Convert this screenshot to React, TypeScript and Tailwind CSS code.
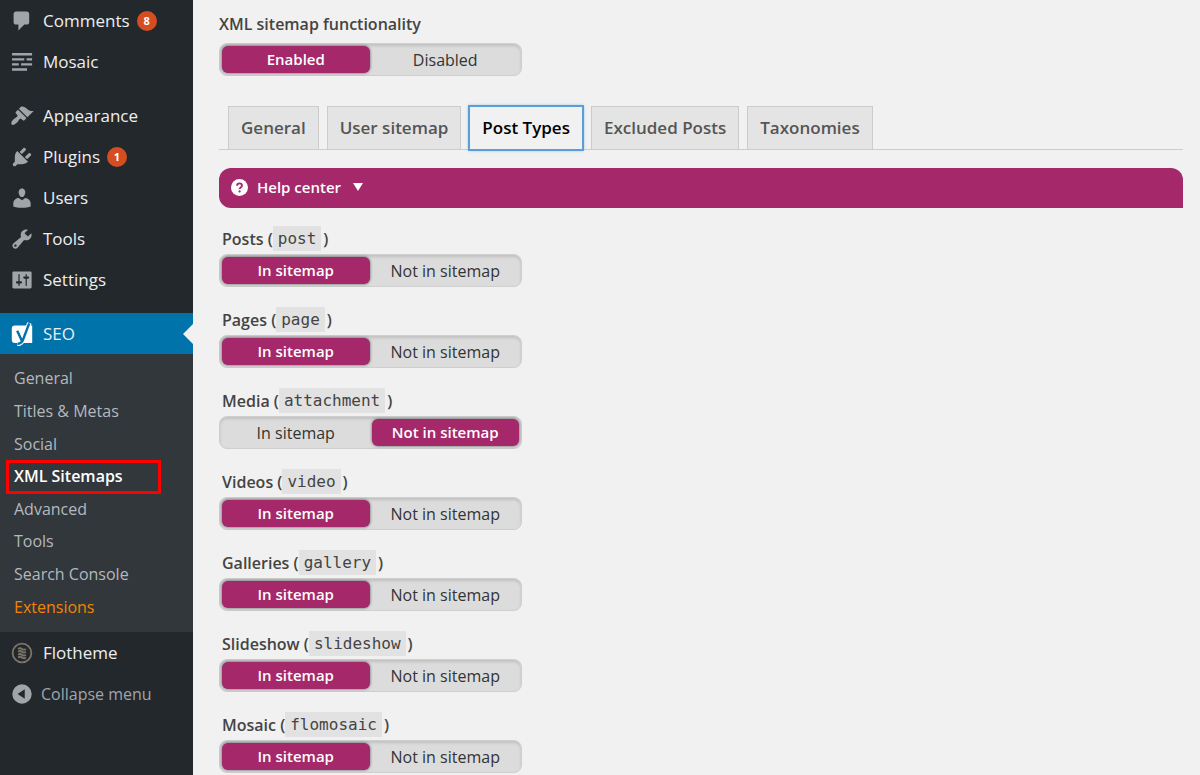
import React, { useState } from "react";

const icons: Record<string, React.ReactNode> = {
  comments: <path d="M5 2h9c1.1 0 2 .9 2 2v7c0 1.1-.9 2-2 2h-2l-5 5v-5H5c-1.1 0-2-.9-2-2V4c0-1.1.9-2 2-2z" />,
  mosaic: <path d="M1.700 2.600h16.700v2H1.700zM1.700 6.800h10.200v2H1.700zM13.800 6.800h4.600v2h-4.600zM1.700 11h5.600v2H1.700zM9.200 11h9.200v2H9.200zM1.700 15.200h12.500v2H1.700z" />,
  appearance: <path d="M14.48 11.06L7.41 3.99l1.5-1.5c.5-.56 2.3-.47 3.51.32 1.21.8 1.43 1.28 2.91 2.1 1.18.64 2.45 1.26 4.45.85zm-.71.71L6.7 4.7 4.93 6.47c-.39.39-.39 1.02 0 1.41l1.06 1.06c.39.39.39 1.03 0 1.42-.6.6-1.43 1.11-2.21 1.69-.35.26-.7.53-1.01.84C1.43 14.23.4 16.08 1.4 17.07c.99 1 2.84-.03 4.18-1.36.31-.31.58-.66.85-1.02.57-.78 1.08-1.61 1.69-2.21.39-.39 1.02-.39 1.41 0l1.06 1.06c.39.39 1.02.39 1.41 0z" />,
  plugins: <path d="M13.11 4.36L9.87 7.6 8 5.73l3.24-3.24c.35-.34 1.05-.2 1.56.32.52.51.66 1.21.31 1.55zm-8 1.77l.91-1.12 9.01 9.01-1.19.84c-.71.71-2.63 1.16-3.82 1.16H6.14L4.9 17.26c-.59.59-1.54.59-2.12 0-.59-.58-.59-1.53 0-2.12l1.24-1.24v-3.88c0-1.13.4-3.19 1.09-3.89zm7.26 3.97l3.24-3.24c.34-.35 1.04-.21 1.55.31.52.51.66 1.21.31 1.55l-3.24 3.25z" />,
  users: <path d="M10 9.25c-2.27 0-2.73-3.44-2.73-3.44C7 4.02 7.82 2 9.97 2c2.16 0 2.98 2.02 2.71 3.81 0 0-.41 3.44-2.68 3.44zm0 2.57L12.72 10c2.39 0 4.52 2.33 4.52 4.53v2.49s-3.65 1.13-7.24 1.13c-3.65 0-7.24-1.13-7.24-1.13v-2.49c0-2.25 1.94-4.48 4.47-4.48z" />,
  tools: <path d="M16.68 9.77c-1.34 1.34-3.3 1.67-4.95.99l-5.41 6.52c-.99.99-2.59.99-3.58 0s-.99-2.59 0-3.57l6.52-5.42c-.68-1.65-.35-3.61.99-4.95 1.28-1.28 3.12-1.62 4.72-1.06l-2.89 2.89 2.82 2.82 2.86-2.87c.53 1.58.18 3.39-1.08 4.65zM3.81 16.21c.4.39 1.04.39 1.43 0 .4-.4.4-1.04 0-1.43-.39-.4-1.03-.4-1.43 0-.39.39-.39 1.03 0 1.43z" />,
  settings: <path d="M18 16V4c0-.55-.45-1-1-1H3c-.55 0-1 .45-1 1v12c0 .55.45 1 1 1h14c.55 0 1-.45 1-1zM8 11h1c.55 0 1 .45 1 1s-.45 1-1 1H8v1.5c0 .28-.22.5-.5.5s-.5-.22-.5-.5V13H6c-.55 0-1-.45-1-1s.45-1 1-1h1V5.5c0-.28.22-.5.5-.5s.5.22.5.5V11zm5-2h-1c-.55 0-1-.45-1-1s.45-1 1-1h1V5.5c0-.28.22-.5.5-.5s.5.22.5.5V7h1c.55 0 1 .45 1 1s-.45 1-1 1h-1v5.5c0 .28-.22.5-.5.5s-.5-.22-.5-.5V9z" />,
  seo: (
    <>
      <path fill="#fff" d="M4 3h14.500v14.500H4A2.500 2.500 0 0 1 1.500 15V5.500A2.500 2.500 0 0 1 4 3z" />
      <path fill="none" stroke="#fff" strokeWidth="3.800" d="M16.200 .800L10.700 15.200Q9.500 18.300 6 18.500" />
      <path fill="none" stroke="#0073aa" strokeWidth="2" d="M16 1.200L10.700 15.200Q9.500 18 6.200 18.200M6 7.200l3.800 8.300" />
    </>
  ),
  flotheme: (
    <g fill="none" stroke="#7d7468">
      <circle cx="10" cy="10" r="7.800" strokeWidth="1.500" />
      <path strokeWidth="1.600" d="M6.800 6.600q1.600-1.200 3.200 0t3.200 0M6.800 9q1.600-1.200 3.200 0t3.200 0M6.800 11.400q1.600-1.200 3.200 0t3.200 0M6.800 13.800q1.600-1.200 3.200 0t3.200 0" />
    </g>
  ),
  collapse: <path fillRule="evenodd" d="M10 1.900a8.100 8.100 0 1 0 0 16.200 8.100 8.100 0 0 0 0-16.200zM12.300 6v8L6.300 10z" />,
};

const Icon = ({ name }: { name: string }) => (
  <svg viewBox="0 0 20 20" className="w-6 h-6 shrink-0 fill-[#a0a5aa]" aria-hidden="true">
    {icons[name]}
  </svg>
);

const MenuItem = ({ icon, label, count }: { icon: string; label: string; count?: number }) => (
  <a href="#" className="flex items-center h-[41px] pl-[10px] text-[17px] text-[#eee]">
    <Icon name={icon} />
    <span className="ml-[9px]">{label}</span>
    {count && (
      <span className="ml-[7px] w-5 h-5 rounded-full bg-[#d54e21] text-white text-[11px] leading-5 font-bold text-center">
        {count}
      </span>
    )}
  </a>
);

const subItems = [
  "General",
  "Titles & Metas",
  "Social",
  "XML Sitemaps",
  "Advanced",
  "Tools",
  "Search Console",
  "Extensions",
];

const subItemClass = (item: string) => {
  if (item === "XML Sitemaps") return "text-white font-semibold";
  if (item === "Extensions") return "text-[#f18500]";
  return "text-[#b4b9be]";
};

const Sidebar = () => (
  <nav className="w-[193px] shrink-0 bg-[#23282d]">
    <MenuItem icon="comments" label="Comments" count={8} />
    <MenuItem icon="mosaic" label="Mosaic" />
    <div className="h-[13px]" />
    <MenuItem icon="appearance" label="Appearance" />
    <MenuItem icon="plugins" label="Plugins" count={1} />
    <MenuItem icon="users" label="Users" />
    <MenuItem icon="tools" label="Tools" />
    <MenuItem icon="settings" label="Settings" />
    <div className="h-[13px]" />
    <div className="relative bg-[#0073aa]">
      <MenuItem icon="seo" label="SEO" />
      <span className="absolute right-0 top-[11px] border-y-[10px] border-r-[10px] border-y-transparent border-r-[#f1f1f1]" />
    </div>
    <ul className="grid auto-rows-fr min-h-[278px] pt-2 pb-[9px] bg-[#32373c] text-[16px]">
      {subItems.map((item) => (
        <li key={item} className="relative flex items-center pl-[14px]">
          <a href="#" className={subItemClass(item)}>{item}</a>
          {item === "XML Sitemaps" && (
            <span className="absolute left-[6px] top-0 w-[155px] h-[34px] border-[3px] border-[#f00]" />
          )}
        </li>
      ))}
    </ul>
    <MenuItem icon="flotheme" label="Flotheme" />
    <button className="flex items-center h-[41px] pl-[10px] text-[16px] text-[#a0a5aa]">
      <Icon name="collapse" />
      <span className="ml-[7px]">Collapse menu</span>
    </button>
  </nav>
);

type SwitchProps = {
  name: string;
  options: string[];
  initial?: number;
};

const Switch = ({ name, options, initial = 0 }: SwitchProps) => {
  const [selected, setSelected] = useState(initial);

  return (
    <div className="grid grid-cols-2 gap-[2px] w-[303px] h-[33px] p-[2px] rounded-lg bg-[#dcdcdc] border border-[#cfcfcf] shadow-[inset_0_2px_3px_rgba(0,0,0,0.12)]">
      {options.map((option, i) => (
        <label
          key={option}
          className={
            selected === i
              ? "flex items-center justify-center rounded-md bg-[#a4286a] text-white text-[15px] font-semibold shadow-[0_0_3px_rgba(0,0,0,0.6)]"
              : "flex items-center justify-center rounded-md text-[#333]"
          }
        >
          <input
            type="radio"
            name={name}
            checked={selected === i}
            onChange={() => setSelected(i)}
            className="sr-only"
          />
          {option}
        </label>
      ))}
    </div>
  );
};

const tabs = ["General", "User sitemap", "Post Types", "Excluded Posts", "Taxonomies"];

const postTypes = [
  { label: "Posts", slug: "post" },
  { label: "Pages", slug: "page" },
  { label: "Media", slug: "attachment", excluded: true },
  { label: "Videos", slug: "video" },
  { label: "Galleries", slug: "gallery" },
  { label: "Slideshow", slug: "slideshow" },
  { label: "Mosaic", slug: "flomosaic" },
];

const App = () => {
  const [tab, setTab] = useState("Post Types");

  return (
    <div className="flex min-h-screen bg-[#f1f1f1] font-['Open_Sans',sans-serif] text-[16px] text-[#444]">
      <Sidebar />

      <main className="flex-1 min-w-0 pt-[13px] pl-[26px] pr-[17px]">
        <h2 className="font-semibold leading-[22px] mb-2">XML sitemap functionality</h2>
        <Switch name="sitemap" options={["Enabled", "Disabled"]} />

        <div className="flex items-start gap-2 mt-[30px] pl-[9px] border-b border-[#ccc]">
          {tabs.map((t) => (
            <button
              key={t}
              onClick={() => setTab(t)}
              className={
                tab === t
                  ? "h-[44px] px-[12px] -mb-[2px] border border-[#5b9dd9] bg-[#f1f1f1] text-black text-[17px] font-semibold shadow-[0_0_0_1px_#5b9dd9,0_0_3px_rgba(30,140,190,0.8)]"
                  : "h-[43px] px-[12px] border border-b-0 border-[#ccc] bg-[#e4e4e4] text-[#555] text-[17px] font-semibold"
              }
            >
              {t}
            </button>
          ))}
        </div>

        <button className="flex items-center w-full h-10 mt-[18px] pl-3 pb-[2px] rounded-xl rounded-br-none bg-[#a4286a] text-white text-[15px] font-semibold">
          <svg viewBox="0 0 18 18" className="w-[17px] h-[17px]" aria-hidden="true">
            <circle cx="9" cy="9" r="9" fill="#fff" />
            <path d="M6.400 7.200Q6.400 4.600 9 4.600T11.600 7Q11.600 8.200 10.300 9T9.100 10.800" fill="none" stroke="#a4286a" strokeWidth="2" />
            <circle cx="9.100" cy="13.200" r="1.200" fill="#a4286a" />
          </svg>
          <span className="ml-[9px]">Help center</span>
          <svg viewBox="0 0 10 8" className="w-[10px] h-2 ml-3 fill-white" aria-hidden="true">
            <path d="M0 0h10L5 8z" />
          </svg>
        </button>

        <div className="mt-[18px]">
          {postTypes.map(({ label, slug, excluded }) => (
            <div key={slug} className="h-[81px]">
              <h3 className="flex items-center h-[25px] mb-[3px] pl-[3px] font-semibold">
                {label} (
                <code className="h-[25px] px-[5px] mr-[2px] leading-[25px] bg-[#e2e2e2] font-['DejaVu_Sans_Mono',monospace] text-[16px] font-normal">
                  {slug}
                </code>
                )
              </h3>
              <Switch name={slug} options={["In sitemap", "Not in sitemap"]} initial={excluded ? 1 : 0} />
            </div>
          ))}
        </div>
      </main>
    </div>
  );
};

export default App;
